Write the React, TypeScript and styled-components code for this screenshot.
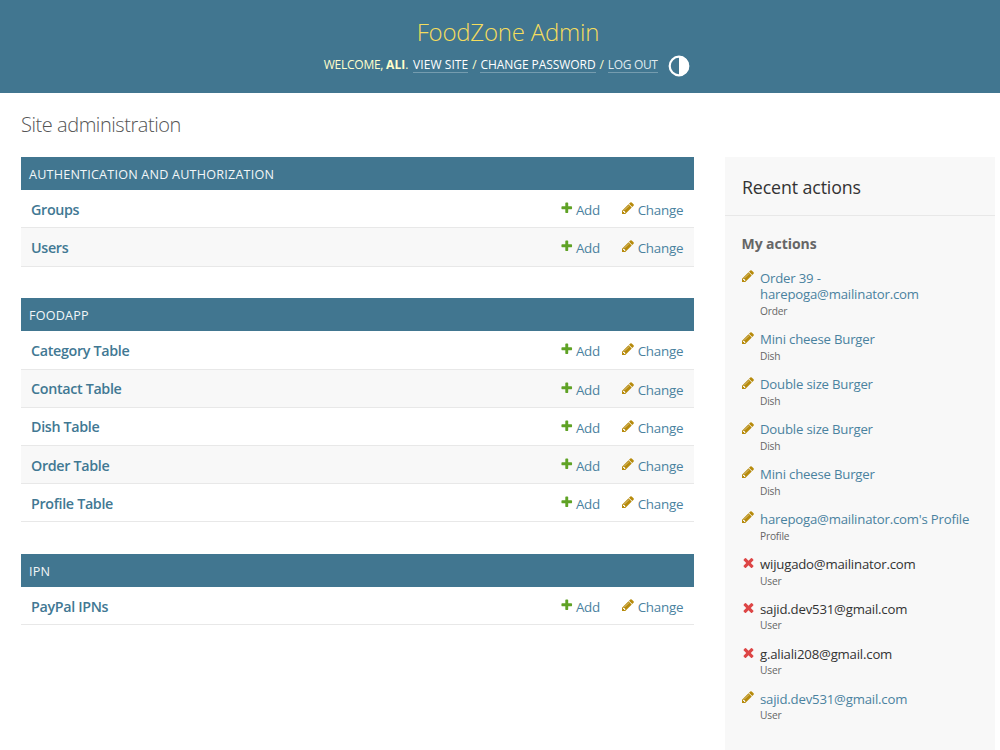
import React from "react";
import styled, { createGlobalStyle } from "styled-components";

const GlobalStyle = createGlobalStyle`
  * { box-sizing: border-box; }
  body {
    margin: 0;
    background: #fff;
    color: #333;
    font-family: "Open Sans", "Noto Sans", sans-serif;
  }
  h1, h2, h3, p, ul { margin: 0; padding: 0; font-weight: 400; }
  ul { list-style: none; }
`;

const Page = styled.div`
  width: 1000px;
  height: 750px;
  display: flex;
  flex-direction: column;
  overflow: hidden;
`;

const Header = styled.header`
  height: 93px;
  flex: none;
  padding-top: 16px;
  background: #417690;
  display: flex;
  flex-direction: column;
  align-items: center;
`;

const Brand = styled.h1`
  padding-left: 16px;
  font-size: 24px;
  font-weight: 300;
  line-height: 32px;
  letter-spacing: -0.2px;
  color: #f5dd5d;
`;

const UserTools = styled.div`
  height: 22px;
  margin-top: 6px;
  padding-left: 14px;
  display: flex;
  align-items: center;
  font-size: 12px;
  line-height: 18px;
  color: #ffc;
  white-space: pre;
`;

const Welcome = styled.span`
  width: 89.3px;
  height: 18px;
  letter-spacing: -0.24px;
  strong { font-weight: 700; letter-spacing: 0; }
`;

const ToolLink = styled.a<{ $width: number; $spacing: number; $dim?: boolean }>`
  width: ${(p) => p.$width}px;
  height: 17px;
  margin-top: -1px;
  line-height: 18px;
  letter-spacing: ${(p) => p.$spacing}px;
  color: ${(p) => (p.$dim ? "#dfe9ee" : "#fff")};
  border-bottom: 1px solid rgba(255, 255, 255, 0.28);
`;

const Slash = styled.span`
  width: 12.2px;
  height: 18px;
  text-align: center;
`;

const ThemeToggle = styled.button`
  margin: 2px 0 0 10.5px;
  padding: 0;
  border: 0;
  background: none;
  display: flex;
  svg { width: 22px; height: 22px; }
`;

const Content = styled.div`
  flex: 1;
  padding: 18px 5px 0 21px;
  display: flex;
  flex-direction: column;
`;

const PageTitle = styled.h1`
  height: 46px;
  font-size: 20px;
  font-weight: 300;
  line-height: 28px;
  letter-spacing: -0.45px;
  color: #555;
`;

const Columns = styled.div`
  flex: 1;
  display: grid;
  grid-template-columns: 673px 270px;
  column-gap: 31px;
`;

const Modules = styled.main`
  display: flex;
  flex-direction: column;
  gap: 31.5px;
`;

const Caption = styled.h2`
  height: 33.3px;
  padding: 1px 0 0 8px;
  background: #417690;
  color: #f2f6f8;
  font-size: 12.6px;
  line-height: 33px;
  letter-spacing: 0.21px;
`;

const Row = styled.div`
  height: 38.2px;
  padding-left: 10px;
  display: grid;
  grid-template-columns: 528.6px 61.2px 1fr;
  align-items: center;
  border-bottom: 1px solid #e8e8e8;
  &:nth-of-type(even) { background: #f8f8f8; }
`;

const ModelName = styled.a`
  padding-top: 2px;
  font-size: 14.3px;
  font-weight: 600;
  line-height: 20px;
  letter-spacing: -0.33px;
  color: #417893;
`;

const Action = styled.a<{ $gap: number }>`
  display: flex;
  align-items: flex-start;
  gap: ${(p) => p.$gap}px;
  margin-top: 2.6px;
  font-size: 13.4px;
  line-height: 18px;
  letter-spacing: -0.24px;
  color: #4a829f;
  svg { flex: none; }
`;

const Sidebar = styled.aside`
  background: #f8f8f8;
`;

const SidebarTitle = styled.h2`
  height: 59px;
  padding: 1px 0 0 17px;
  border-bottom: 1px solid #e8e8e8;
  font-size: 17.8px;
  line-height: 59px;
  letter-spacing: -0.12px;
`;

const SidebarSubtitle = styled.h3`
  padding: 17.5px 0 0 16.5px;
  height: 53.2px;
  font-size: 14px;
  font-weight: 700;
  line-height: 20px;
  letter-spacing: -0.06px;
  color: #666;
`;

const Entry = styled.li`
  padding: 0 20px 10.9px 16px;
  display: grid;
  grid-template-columns: 19px 1fr;
  line-height: 16.7px;
`;

const EntryIcon = styled.span`
  height: 16px;
  display: flex;
  align-items: flex-start;
`;

const EntryText = styled.div`
  padding-top: 0.6px;
`;

const EntryName = styled.p<{ $link: boolean }>`
  width: 215px;
  font-size: 13.2px;
  letter-spacing: -0.2px;
  color: ${(p) => (p.$link ? "#4a829f" : "#333")};
`;

const EntryKind = styled.p`
  font-size: 10.2px;
  letter-spacing: -0.2px;
  color: #666;
`;

const PlusIcon = () => (
  <svg width="13.5" height="13.5" viewBox="0 0 1792 1792">
    <path fill="#5fa225" d="M1600 796v192q0 40-28 68t-68 28h-416v416q0 40-28 68t-68 28h-192q-40 0-68-28t-28-68v-416h-416q-40 0-68-28t-28-68v-192q0-40 28-68t68-28h416v-416q0-40 28-68t68-28h192q40 0 68 28t28 68v416h416q40 0 68 28t28 68z" />
  </svg>
);

const PencilIcon = () => (
  <svg width="14" height="14" viewBox="0 0 1792 1792">
    <path fill="#b78b0c" d="M491 1536l91-91-235-235-91 91v107h128v128h107zm523-928q0-22-22-22-10 0-17 7l-542 542q-7 7-7 17 0 22 22 22 10 0 17-7l542-542q7-7 7-17zm-54-192l416 416-832 832h-416v-416zm683 96q0 53-37 90l-166 166-416-416 166-165q36-38 90-38 53 0 91 38l235 234q37 39 37 91z" />
  </svg>
);

const CrossIcon = () => (
  <svg width="15" height="15" viewBox="0 0 1792 1792">
    <path fill="#dd4646" d="M1490 1322q0 40-28 68l-136 136q-28 28-68 28t-68-28l-294-294-294 294q-28 28-68 28t-68-28l-136-136q-28-28-28-68t28-68l294-294-294-294q-28-28-28-68t28-68l136-136q28-28 68-28t68 28l294 294 294-294q28-28 68-28t68 28l136 136q28 28 28 68t-28 68l-294 294 294 294q28 28 28 68z" />
  </svg>
);

const modules = [
  { title: "AUTHENTICATION AND AUTHORIZATION", models: ["Groups", "Users"] },
  {
    title: "FOODAPP",
    models: ["Category Table", "Contact Table", "Dish Table", "Order Table", "Profile Table"],
  },
  { title: "IPN", models: ["PayPal IPNs"] },
];

const entries = [
  { name: "Order 39 - harepoga@mailinator.com", kind: "Order" },
  { name: "Mini cheese Burger", kind: "Dish" },
  { name: "Double size Burger", kind: "Dish" },
  { name: "Double size Burger", kind: "Dish" },
  { name: "Mini cheese Burger", kind: "Dish" },
  { name: "harepoga@mailinator.com's Profile", kind: "Profile" },
  { name: "wijugado@mailinator.com", kind: "User", removed: true },
  { name: "sajid.dev531@gmail.com", kind: "User", removed: true },
  { name: "g.aliali208@gmail.com", kind: "User", removed: true },
  { name: "sajid.dev531@gmail.com", kind: "User" },
];

export default function App() {
  return (
    <Page>
      <GlobalStyle />
      <Header>
        <Brand>FoodZone Admin</Brand>
        <UserTools>
          <Welcome>
            WELCOME, <strong>ALI</strong>.
          </Welcome>
          <ToolLink $width={55.3} $spacing={0.08}>VIEW SITE</ToolLink>
          <Slash>/</Slash>
          <ToolLink $width={115.2} $spacing={-0.06}>CHANGE PASSWORD</ToolLink>
          <Slash>/</Slash>
          <ToolLink $width={50} $spacing={-0.33} $dim>LOG OUT</ToolLink>
          <ThemeToggle aria-label="Toggle theme">
            <svg viewBox="0 0 22 22">
              <circle cx="11" cy="11" r="9.3" fill="none" stroke="#fff" strokeWidth="2.2" />
              <path d="M11 1a10 10 0 0 1 0 20z" fill="#fff" />
            </svg>
          </ThemeToggle>
        </UserTools>
      </Header>
      <Content>
        <PageTitle>Site administration</PageTitle>
        <Columns>
          <Modules>
            {modules.map((m) => (
              <section key={m.title}>
                <Caption>{m.title}</Caption>
                {m.models.map((name) => (
                  <Row key={name}>
                    <ModelName>{name}</ModelName>
                    <Action $gap={2.8}>
                      <PlusIcon />
                      Add
                    </Action>
                    <Action $gap={2.9}>
                      <PencilIcon />
                      Change
                    </Action>
                  </Row>
                ))}
              </section>
            ))}
          </Modules>
          <Sidebar>
            <SidebarTitle>Recent actions</SidebarTitle>
            <SidebarSubtitle>My actions</SidebarSubtitle>
            <ul>
              {entries.map((e, i) => (
                <Entry key={i}>
                  <EntryIcon>
                    {e.removed ? <CrossIcon /> : <PencilIcon />}
                  </EntryIcon>
                  <EntryText>
                    <EntryName $link={!e.removed}>{e.name}</EntryName>
                    <EntryKind>{e.kind}</EntryKind>
                  </EntryText>
                </Entry>
              ))}
            </ul>
          </Sidebar>
        </Columns>
      </Content>
    </Page>
  );
}
